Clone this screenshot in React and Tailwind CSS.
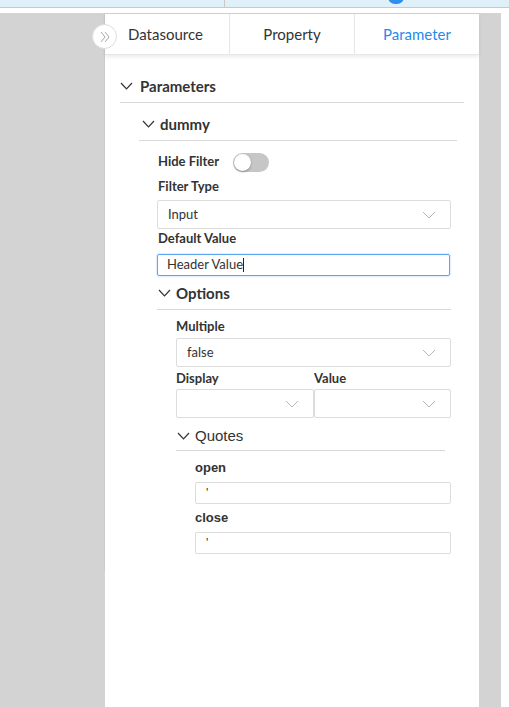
import React from "react";

const Chev = ({ className = "" }) => (
  <svg width="13" height="8" viewBox="0 0 13 8" className={className} fill="none" stroke="#333" strokeWidth="1.2">
    <path d="M1 1 L6.5 6.8 L12 1" />
  </svg>
);

const SelChev = () => (
  <svg width="14" height="8" viewBox="0 0 14 8" fill="none" stroke="#b5b5b5" strokeWidth="1">
    <path d="M1 1 L7 7 L13 1" />
  </svg>
);

const Select = ({ value, className = "" }) => (
  <div className={`h-[29px] border border-[#dcdcdc] rounded-[2px] flex items-center justify-between pl-[10px] pr-[14px] text-[13px] text-[#333] bg-white ${className}`}>
    <span>{value}</span>
    <SelChev />
  </div>
);

export default function App() {
  return (
    <div className="w-[509px] h-[707px] bg-white overflow-hidden flex flex-col" style={{ fontFamily: "Lato, 'Open Sans', sans-serif" }}>
      {/* top bar */}
      <div className="h-[8px] bg-[#dff0f9] border-b border-[#c9c9c9] relative shrink-0">
        <div className="absolute left-[224px] top-0 h-full w-px bg-[#c9c9c9]" />
        <div className="absolute left-[388px] top-[-10px] w-[16px] h-[14px] rounded-full bg-[#2d8ef0]" />
      </div>
      <div className="h-[5px] shrink-0" />
      <div className="flex flex-1 min-h-0">
        <div className="w-[105px] bg-[#d3d3d3] shrink-0 relative">
          <div className="absolute right-0 top-0 w-px h-[558px] bg-[#cbcbcb]" />
        </div>
        <div className="w-[374px] shrink-0 bg-white relative border-t border-[#d0d0d0]">
          {/* collapse button */}
          <div className="absolute left-[-13px] top-[10px] w-[25px] h-[25px] rounded-full bg-white border border-[#dedede] flex items-center justify-center z-10">
            <svg width="12" height="12" viewBox="0 0 12 12" fill="none" stroke="#a8a8a8" strokeWidth="1">
              <path d="M2 1 L6 6 L2 11" />
              <path d="M6 1 L10 6 L6 11" />
            </svg>
          </div>
          {/* tabs */}
          <div className="flex h-[41px] shadow-[0_2px_4px_rgba(0,0,0,0.08)] border-b border-[#e6e6e6] text-[15px]">
            <div className="w-[125px] border-r border-[#e6e6e6] flex items-center pl-[23px] text-[#333]">Datasource</div>
            <div className="w-[125px] border-r border-[#e6e6e6] flex items-center justify-center text-[#333]">Property</div>
            <div className="flex-1 flex items-center justify-center text-[#1f8ceb]">Parameter</div>
          </div>

          <div className="pl-[15px] pr-[15px] pt-[20px] text-[#333]">
            {/* Parameters */}
            <div className="flex items-center gap-[7px] h-[22px] pb-0">
              <Chev />
              <span className="text-[15px] font-bold">Parameters</span>
            </div>
            <div className="h-px bg-[#d9d9d9] mt-[5px]" />

            <div className="pl-[19px] pr-[7px]">
              <div className="flex items-center gap-[5px] h-[22px] mt-[10px] pl-[3px]">
                <Chev />
                <span className="text-[15px] font-bold">dummy</span>
              </div>
              <div className="h-px bg-[#d9d9d9] mt-[5px]" />

              <div className="pl-[18px] pr-[6px]">
                <div className="flex items-center mt-[11px] h-[20px]">
                  <span className="text-[13px] font-bold pl-[1px]">Hide Filter</span>
                  <div className="ml-[14px] w-[36px] h-[19px] rounded-full bg-[#c6c6c6] relative">
                    <div className="absolute left-[1px] top-[1px] w-[17px] h-[17px] rounded-full bg-white shadow-[0_1px_2px_rgba(0,0,0,0.35)]" />
                  </div>
                </div>
                <div className="text-[13px] font-bold mt-[6px] h-[17px] leading-[17px] pl-[1px]">Filter Type</div>
                <Select value="Input" className="mt-[5px]" />
                <div className="text-[13px] font-bold mt-[1px] h-[17px] leading-[17px] pl-[1px]">Default Value</div>
                <div className="mt-[7px] h-[22px] border border-[#5aa9f0] rounded-[2px] shadow-[0_0_2px_rgba(40,140,240,0.5)] flex items-center pl-[9px] text-[13px] mr-[1px]">
                  Header Value<span className="w-px h-[14px] bg-[#222]" />
                </div>

                {/* Options */}
                <div className="flex items-center gap-[5px] h-[20px] mt-[7px] pl-[1px]">
                  <Chev />
                  <span className="text-[15px] font-bold">Options</span>
                </div>
                <div className="h-px bg-[#d9d9d9] mt-[6px]" />

                <div className="pl-[19px]">
                  <div className="text-[13px] font-bold mt-[8px] h-[17px] leading-[17px]">Multiple</div>
                  <Select value="false" className="mt-[3px]" />
                  <div className="flex mt-[2px] h-[20px] items-center">
                    <div className="w-[138px] text-[13px] font-bold">Display</div>
                    <div className="text-[13px] font-bold">Value</div>
                  </div>
                  <div className="flex">
                    <Select value="" className="w-[138px]" />
                    <Select value="" className="flex-1" />
                  </div>

                  {/* Quotes */}
                  <div className="pr-[6px]">
                    <div className="flex items-center gap-[5px] h-[20px] mt-[8px] pl-[1px]" style={{ fontFamily: "'Liberation Sans', Arial, sans-serif" }}>
                      <Chev />
                      <span className="text-[15px]">Quotes</span>
                    </div>
                    <div className="h-px bg-[#d9d9d9] mt-[4px]" />
                  </div>
                  <div className="pl-[19px]" style={{ fontFamily: "'Liberation Sans', Arial, sans-serif" }}>
                    <div className="text-[13px] font-semibold mt-[8px] h-[17px] leading-[17px]">open</div>
                    <div className="mt-[6px] h-[22px] border border-[#dcdcdc] rounded-[2px] flex items-center pl-[10px] text-[12px]">'</div>
                    <div className="text-[13px] font-semibold mt-[5px] h-[17px] leading-[17px]">close</div>
                    <div className="mt-[6px] h-[22px] border border-[#dcdcdc] rounded-[2px] flex items-center pl-[10px] text-[12px]">'</div>
                  </div>
                </div>
              </div>
            </div>
          </div>
        </div>
        <div className="w-[22px] bg-[#d3d3d3] shrink-0" />
        <div className="flex-1 bg-white" />
      </div>
    </div>
  );
}
